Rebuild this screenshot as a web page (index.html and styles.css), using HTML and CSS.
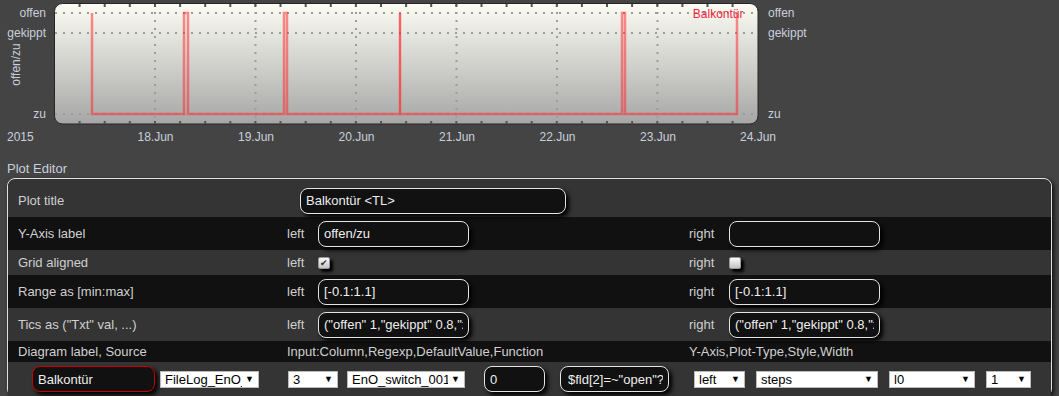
FILE: index.html
```html
<!DOCTYPE html>
<html lang="de">
<head>
  <meta charset="UTF-8">
  <meta name="viewport" content="width=device-width, initial-scale=1.0">
  <title>Plot Editor</title>
<link rel="stylesheet" href="styles.css">
</head>
<body>
  <div class="plot">
    <svg class="plot-svg" width="807" height="160" viewBox="0 0 807 160">
      <defs>
        <linearGradient id="plotBg" x1="0" y1="0" x2="0" y2="1">
          <stop offset="0" stop-color="#fcfcf4"/>
          <stop offset="1" stop-color="#a6a6a6"/>
        </linearGradient>
      </defs>

      <rect x="54.5" y="3.5" width="703.5" height="120.5" rx="8" fill="url(#plotBg)" stroke="#262626"/>

      <!-- grid -->
      <g class="grid">
        <path d="M55,13H758 M55,33H758 M55,114H758"/>
        <path d="M155,4V124 M255.5,4V124 M356,4V124 M456.5,4V124 M557,4V124 M657.5,4V124"/>
      </g>

      <!-- ticks, 6h -->
      <g class="ticks">
        <path d="M79.6,4v3 M104.7,4v3 M129.8,4v3 M155,4v3 M180.1,4v3 M205.2,4v3 M230.3,4v3 M255.4,4v3 M280.5,4v3 M305.7,4v3 M330.8,4v3 M355.9,4v3 M381,4v3 M406.1,4v3 M431.2,4v3 M456.3,4v3 M481.5,4v3 M506.6,4v3 M531.7,4v3 M556.8,4v3 M581.9,4v3 M607,4v3 M632.1,4v3 M657.3,4v3 M682.4,4v3 M707.5,4v3 M732.6,4v3"/>
        <path d="M79.6,124v-3 M104.7,124v-3 M129.8,124v-3 M155,124v-3 M180.1,124v-3 M205.2,124v-3 M230.3,124v-3 M255.4,124v-3 M280.5,124v-3 M305.7,124v-3 M330.8,124v-3 M355.9,124v-3 M381,124v-3 M406.1,124v-3 M431.2,124v-3 M456.3,124v-3 M481.5,124v-3 M506.6,124v-3 M531.7,124v-3 M556.8,124v-3 M581.9,124v-3 M607,124v-3 M632.1,124v-3 M657.3,124v-3 M682.4,124v-3 M707.5,124v-3 M732.6,124v-3"/>
      </g>

      <!-- data -->
      <path class="line" d="M92,13V114H184V13H188V114H284V13H287V114H400V13V114H622V13H625V114H737V13"/>
      <path class="line line-hi" d="M400,13V114"/>

      <text class="legend" x="743.5" y="18" text-anchor="end">Balkontür</text>

      <g class="axis">
        <text x="46" y="17" text-anchor="end">offen</text>
        <text x="46" y="37" text-anchor="end">gekippt</text>
        <text x="46" y="117.5" text-anchor="end">zu</text>
        <text transform="translate(20,64.5) rotate(-90)" text-anchor="middle">offen/zu</text>

        <text x="768" y="17">offen</text>
        <text x="768" y="37">gekippt</text>
        <text x="768" y="117.5">zu</text>

        <text x="7" y="141">2015</text>
        <text x="155.5" y="141" text-anchor="middle">18.Jun</text>
        <text x="256" y="141" text-anchor="middle">19.Jun</text>
        <text x="356.5" y="141" text-anchor="middle">20.Jun</text>
        <text x="457" y="141" text-anchor="middle">21.Jun</text>
        <text x="557.5" y="141" text-anchor="middle">22.Jun</text>
        <text x="658" y="141" text-anchor="middle">23.Jun</text>
        <text x="758" y="141" text-anchor="middle">24.Jun</text>
      </g>
    </svg>
  </div>

  <div class="editor-title">Plot Editor</div>

  <div class="editor">
    <div class="row odd">
      <div class="cell-label">Plot title</div>
      <input type="text" class="field field-title" value="Balkontür &lt;TL&gt;">
    </div>

    <div class="row even">
      <div class="cell-label">Y-Axis label</div>
      <div>left</div>
      <input type="text" class="field" value="offen/zu">
      <div>right</div>
      <input type="text" class="field" value="">
    </div>

    <div class="row odd row-thin">
      <div class="cell-label">Grid aligned</div>
      <div>left</div>
      <span class="check checked">&#10004;</span>
      <div>right</div>
      <span class="check"></span>
    </div>

    <div class="row even">
      <div class="cell-label">Range as [min:max]</div>
      <div>left</div>
      <input type="text" class="field" value="[-0.1:1.1]">
      <div>right</div>
      <input type="text" class="field" value="[-0.1:1.1]">
    </div>

    <div class="row odd">
      <div class="cell-label">Tics as ("Txt" val, ...)</div>
      <div>left</div>
      <input type="text" class="field" value='("offen" 1,"gekippt" 0.8,"zu" 0)'>
      <div>right</div>
      <input type="text" class="field" value='("offen" 1,"gekippt" 0.8,"zu" 0)'>
    </div>

    <div class="row even row-head">
      <div class="cell-label">Diagram label, Source</div>
      <div class="span-mid">Input:Column,Regexp,DefaultValue,Function</div>
      <div class="span-right">Y-Axis,Plot-Type,Style,Width</div>
    </div>

    <div class="row-plot odd">
      <input type="text" class="field field-name" value="Balkontür">
      <span class="sel c-src"><select><option>FileLog_EnO_switch</option></select></span>
      <span class="sel c-col"><select><option>3</option></select></span>
      <span class="sel c-re"><select><option>EnO_switch_0012AB</option></select></span>
      <input type="text" class="field c-def" value="0">
      <input type="text" class="field c-fn" value='$fld[2]=~"open"?1:0'>
      <span class="sel c-axis"><select><option>left</option></select></span>
      <span class="sel c-type"><select><option>steps</option></select></span>
      <span class="sel c-style"><select><option>l0</option></select></span>
      <span class="sel c-width"><select><option>1</option></select></span>
    </div>
  </div>
</body>
</html>
```

FILE: styles.css
```css
/* General */
body {
  margin: 0;
  background-color: #444;
  color: #d0d0d0;
  font-family: "Liberation Sans", Arial, sans-serif;
  font-size: 13px;
  overflow: hidden;
}

/* Plot */
.plot-svg {
  display: block;
  font-family: "Liberation Sans", Arial, sans-serif;
  font-size: 12px;
}

.plot-svg .grid path {
  fill: none;
  stroke: #9c9c9c;
  stroke-width: 2;
  stroke-dasharray: 2 6;
}

.plot-svg .ticks path {
  fill: none;
  stroke: #555;
  stroke-width: 2;
}

.plot-svg .line {
  fill: none;
  stroke: #ff3030;
  stroke-opacity: 0.55;
  stroke-width: 2.5;
}

.plot-svg .line-hi {
  stroke-width: 1.5;
}

.plot-svg .legend {
  fill: #f2243c;
}

.plot-svg .axis text {
  fill: #c9d0dc;
}

/* Editor */
.editor-title {
  height: 18px;
  line-height: 18px;
  padding-left: 7px;
  color: #c9d0dc;
}

.editor {
  margin-left: 7px;
  width: 1045px;
  box-sizing: border-box;
  border: 1px solid #e0e0e0;
  border-radius: 8px;
  background-color: #343434;
  padding-top: 5px;
  box-shadow: 2px 2px 4px #111;
}

.row {
  display: grid;
  grid-template-columns: 279px 31px 371px 40px 1fr;
  align-items: center;
  height: 33px;
}

.row-thin {
  height: 25px;
}

.row-head {
  height: 21px;
}

.odd {
  background-color: #343434;
}

.even {
  background-color: #111;
}

.cell-label {
  padding-left: 10px;
}

.span-mid {
  grid-column: 2 / 4;
}

.span-right {
  grid-column: 4 / 6;
}

/* Inputs */
.field {
  box-sizing: border-box;
  width: 151px;
  height: 26px;
  padding: 0 5px;
  background-color: #111;
  color: #eee;
  border: 1px solid #e4e4e4;
  border-radius: 8px;
  font-family: inherit;
  font-size: 13px;
  box-shadow: 3px 3px 4px #000;
  outline: none;
}

.field-title {
  grid-column: 2 / 5;
  margin-left: 13px;
  width: 266px;
}

.check {
  box-sizing: border-box;
  width: 12px;
  height: 12px;
  border: 1px solid #999;
  border-radius: 2px;
  background: linear-gradient(#fafafa, #c4c4c4);
  box-shadow: 3px 3px 3px #000;
  color: #333;
  font-size: 9px;
  line-height: 10px;
  text-align: center;
}

/* Plot line row */
.row-plot {
  display: flex;
  align-items: center;
  height: 34px;
  padding-left: 24px;
}

.field-name {
  width: 123px;
  border-color: #c00;
}

.sel {
  position: relative;
  display: block;
  height: 17px;
  flex: none;
}

.sel select {
  -webkit-appearance: none;
  appearance: none;
  box-sizing: border-box;
  width: 100%;
  height: 17px;
  padding: 0 16px 0 4px;
  border: 1px solid #bbb;
  border-radius: 0;
  background-color: #fff;
  color: #000;
  font-family: inherit;
  font-size: 13px;
  line-height: 15px;
}

.sel::after {
  content: "\25BC";
  position: absolute;
  right: 5px;
  top: 3px;
  font-size: 9px;
  line-height: 11px;
  color: #000;
  pointer-events: none;
}

.c-src   { margin-left: 5px;  width: 99px; }
.c-col   { margin-left: 29px; width: 50px; }
.c-re    { margin-left: 9px;  width: 118px; }
.c-def   { margin-left: 19px; width: 61px; flex: none; }
.c-fn    { margin-left: 15px; width: 109px; flex: none; padding-left: 7px; }
.c-axis  { margin-left: 25px; width: 51px; }
.c-type  { margin-left: 11px; width: 122px; }
.c-style { margin-left: 11px; width: 86px; }
.c-width { margin-left: 11px; width: 45px; }
```
